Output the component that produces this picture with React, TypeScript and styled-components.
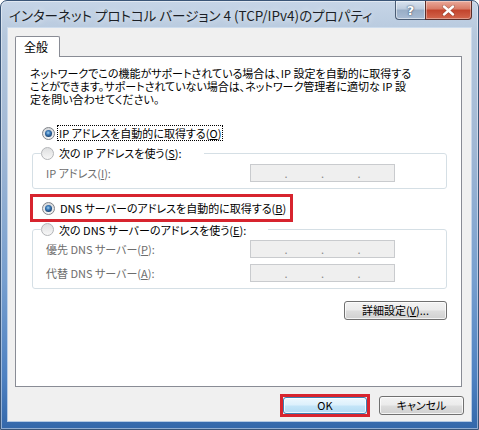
import React from "react";
import styled, { createGlobalStyle } from "styled-components";

const GlobalStyle = createGlobalStyle`
  html, body {
    margin: 0;
    padding: 0;
    background: #fff;
  }
  body {
    font-family: "Noto Sans CJK JP", "Noto Sans", sans-serif;
    font-feature-settings: "palt";
  }
`;

const uiFont = `"Noto Sans CJK JP", "Noto Sans", sans-serif`;

const App = () => {
    return (
        <>
            <GlobalStyle />
            <Frame>
                <TitleBar>
                    <Title>インターネット プロトコル バージョン 4 (TCP/IPv4)のプロパティ</Title>
                    <CaptionButtons>
                        <HelpButton>?</HelpButton>
                        <CloseButton>
                            <svg width="13" height="11" viewBox="0 0 13 11">
                                <path d="M2 1.5 L11 9.5 M11 1.5 L2 9.5" stroke="#3b1a14" strokeWidth="3.6" strokeLinecap="round" opacity="0.35" />
                                <path d="M2 1.5 L11 9.5 M11 1.5 L2 9.5" stroke="#fff" strokeWidth="2.4" strokeLinecap="round" />
                            </svg>
                        </CloseButton>
                    </CaptionButtons>
                </TitleBar>
                <Client>
                    <TabStrip>
                        <Tab>全般</Tab>
                    </TabStrip>
                    <Panel>
                        <Description>
                            ネットワークでこの機能がサポートされている場合は、IP 設定を自動的に取得する
                            <br />
                            ことができます。サポートされていない場合は、ネットワーク管理者に適切な IP 設
                            <br />
                            定を問い合わせてください。
                        </Description>

                        <RadioRow $indent={26}>
                            <Radio $checked />
                            <Label $focused>
                                IP アドレスを自動的に取得する(<u>O</u>)
                            </Label>
                        </RadioRow>

                        <GroupBox>
                            <Legend>
                                <RadioRow $height={16}>
                                    <Radio />
                                    <Label>
                                        次の IP アドレスを使う(<u>S</u>):
                                    </Label>
                                </RadioRow>
                            </Legend>
                            <FieldRow>
                                <FieldLabel>
                                    IP アドレス(<u>I</u>):
                                </FieldLabel>
                                <IpField />
                            </FieldRow>
                        </GroupBox>

                        <Highlight>
                            <RadioRow>
                                <Radio $checked />
                                <Label>
                                    DNS サーバーのアドレスを自動的に取得する(<u>B</u>)
                                </Label>
                            </RadioRow>
                        </Highlight>

                        <GroupBox $gap={4}>
                            <Legend>
                                <RadioRow $height={15}>
                                    <Radio />
                                    <Label>
                                        次の DNS サーバーのアドレスを使う(<u>E</u>):
                                    </Label>
                                </RadioRow>
                            </Legend>
                            <FieldRow>
                                <FieldLabel>
                                    優先 DNS サーバー(<u>P</u>):
                                </FieldLabel>
                                <IpField />
                            </FieldRow>
                            <FieldRow $top={6}>
                                <FieldLabel>
                                    代替 DNS サーバー(<u>A</u>):
                                </FieldLabel>
                                <IpField />
                            </FieldRow>
                        </GroupBox>

                        <AdvancedButton>
                            詳細設定(<u>V</u>)...
                        </AdvancedButton>
                    </Panel>
                    <Footer>
                        <OkHighlight>
                            <PushButton $primary $width={84} $height={17}>
                                OK
                            </PushButton>
                        </OkHighlight>
                        <PushButton $width={85}>キャンセル</PushButton>
                    </Footer>
                </Client>
            </Frame>
        </>
    );
};

const IpField = () => (
    <IpBox>
        <IpDot>.</IpDot>
        <IpDot>.</IpDot>
        <IpDot>.</IpDot>
    </IpBox>
);

const Frame = styled.div`
    width: 479px;
    height: 430px;
    box-sizing: border-box;
    display: flex;
    flex-direction: column;
    border: 1px solid #3a5577;
    border-radius: 7px 7px 0 0;
    overflow: hidden;
    background: linear-gradient(
        180deg,
        #c6d5e7 0%,
        #b6c8dd 8%,
        #a0b7d4 35%,
        #779fcf 65%,
        #4e81c1 88%,
        #3367aa 100%
    );
    box-shadow: inset 0 0 0 1px rgba(255, 255, 255, 0.45);
`;
const TitleBar = styled.div`
    height: 27px;
    display: flex;
    align-items: flex-start;
    flex: none;
`;
const Title = styled.div`
    padding-left: 8px;
    line-height: 28px;
    font-family: ${uiFont};
    font-size: 13.5px;
    color: #1b1f26;
    white-space: nowrap;
    text-shadow: 0 0 6px rgba(255, 255, 255, 0.8);
`;
const CaptionButtons = styled.div`
    margin-left: auto;
    margin-right: 6px;
    display: flex;
`;
const HelpButton = styled.div`
    width: 30px;
    height: 19px;
    box-sizing: border-box;
    border: 1px solid #4a5c74;
    border-top: none;
    border-right: none;
    border-radius: 0 0 0 4px;
    background: linear-gradient(180deg, #d9e3ef 0%, #bccbdd 45%, #98adc6 50%, #a9bcd4 100%);
    box-shadow: inset 0 0 0 1px rgba(255, 255, 255, 0.5);
    display: flex;
    align-items: center;
    justify-content: center;
    color: #fff;
    font-family: "DejaVu Sans", sans-serif;
    font-weight: bold;
    font-size: 13px;
    text-shadow: 0 0 2px #3d506a, 0 0 1px #3d506a;
`;
const CloseButton = styled.div`
    width: 47px;
    height: 19px;
    box-sizing: border-box;
    border: 1px solid #5a2d28;
    border-top: none;
    border-radius: 0 0 4px 0;
    background: linear-gradient(180deg, #e9a99a 0%, #d87a65 45%, #c2432c 50%, #d3664d 100%);
    box-shadow: inset 0 0 0 1px rgba(255, 255, 255, 0.35);
    display: flex;
    align-items: center;
    justify-content: center;
`;
const Client = styled.div`
    flex: 1;
    margin: 0 7px 8px;
    padding: 8px 9px 0 7px;
    background: #f0f0f0;
    box-shadow: 0 0 0 1px rgba(210, 224, 240, 0.8);
    display: flex;
    flex-direction: column;
    font-family: ${uiFont};
    font-size: 11px;
    color: #000;
`;
const TabStrip = styled.div`
    display: flex;
    flex: none;
`;
const Tab = styled.div`
    width: 45px;
    height: 21px;
    box-sizing: border-box;
    margin-bottom: -1px;
    position: relative;
    z-index: 1;
    padding-left: 8px;
    line-height: 20px;
    font-size: 12px;
    background: #fff;
    border: 1px solid #898c95;
    border-bottom: none;
    border-radius: 2px 2px 0 0;
`;
const Panel = styled.div`
    flex: 1;
    background: #fff;
    border: 1px solid #898c95;
    display: flex;
    flex-direction: column;
    align-items: flex-start;
    padding-top: 10px;
`;
const Description = styled.p`
    margin: 0 0 0 14px;
    line-height: 13px;
    white-space: nowrap;
`;
const RadioRow = styled.div<{ $indent?: number; $height?: number }>`
    display: flex;
    align-items: center;
    height: ${(p) => p.$height ?? 16}px;
    margin-left: ${(p) => p.$indent ?? 0}px;
    margin-top: ${(p) => (p.$indent ? 19 : 0)}px;
    white-space: nowrap;
`;
const Radio = styled.span<{ $checked?: boolean }>`
    width: 13px;
    height: 13px;
    box-sizing: border-box;
    flex: none;
    border-radius: 50%;
    border: 1px solid ${(p) => (p.$checked ? "#7f8389" : "#b3b5b8")};
    background: ${(p) =>
        p.$checked
            ? "linear-gradient(180deg, #d6d8db 0%, #f3f4f5 100%)"
            : "linear-gradient(180deg, #dedfe0 0%, #f7f7f7 100%)"};
    display: flex;
    align-items: center;
    justify-content: center;
    &::after {
        content: "";
        display: ${(p) => (p.$checked ? "block" : "none")};
        width: 7px;
        height: 7px;
        border-radius: 50%;
        background: radial-gradient(circle at 45% 40%, #9fd0f0 0%, #3c7ab8 35%, #173f6c 75%, #0c2746 100%);
    }
`;
const Label = styled.span<{ $focused?: boolean }>`
    margin-left: ${(p) => (p.$focused ? 2 : 3)}px;
    padding: 0 1px;
    line-height: 14px;
    border: 1px dotted ${(p) => (p.$focused ? "#000" : "transparent")};
`;
const GroupBox = styled.fieldset<{ $gap?: number }>`
    align-self: stretch;
    min-width: 0;
    margin: ${(p) => (p.$gap === 4 ? 0 : 4)}px 14px 0 16px;
    padding: 0 0 6px 0;
    border: 1px solid #d5dfe5;
    border-radius: 3px;
`;
const Legend = styled.legend`
    margin-left: 8px;
    padding: 0 20px 0 0;
`;
const FieldRow = styled.div<{ $top?: number }>`
    display: flex;
    align-items: center;
    height: 18px;
    margin-top: ${(p) => p.$top ?? 3}px;
    padding-left: 13px;
`;
const FieldLabel = styled.span`
    width: 204px;
    color: #6d6d6d;
    white-space: nowrap;
`;
const IpBox = styled.div`
    width: 145px;
    height: 18px;
    box-sizing: border-box;
    border: 1px solid #c9cbce;
    background: #efefef;
    display: flex;
    justify-content: space-evenly;
    align-items: center;
`;
const IpDot = styled.span`
    color: #8a8a8a;
    font-size: 11px;
    line-height: 11px;
`;
const Highlight = styled.div`
    box-sizing: border-box;
    width: 263px;
    height: 28px;
    margin: 5px 0 0 14px;
    padding-left: 9px;
    border: 3px solid #d7242e;
    display: flex;
    align-items: center;
`;
const PushButton = styled.button<{ $primary?: boolean; $width: number; $height?: number }>`
    box-sizing: border-box;
    width: ${(p) => p.$width}px;
    height: ${(p) => p.$height ?? 19}px;
    padding: 0;
    border: 1px solid ${(p) => (p.$primary ? "#3c7fb1" : "#707070")};
    border-radius: 3px;
    background: ${(p) =>
        p.$primary
            ? "linear-gradient(180deg, #eef8fe 0%, #dcf0fc 48%, #c4e5f8 52%, #b3dbf3 100%)"
            : "linear-gradient(180deg, #f3f3f3 0%, #ebebeb 48%, #dddddd 52%, #d0d0d0 100%)"};
    box-shadow: inset 0 0 0 1px rgba(255, 255, 255, 0.75);
    font-family: ${uiFont};
    font-feature-settings: "palt";
    font-size: 11px;
    color: #000;
    line-height: 1;
`;
const AdvancedButton = styled(PushButton).attrs({ $width: 103 })`
    align-self: flex-end;
    margin: 12px 14px 0 0;
`;
const Footer = styled.div`
    flex: none;
    height: 23px;
    margin: 7px -2px 4px 0;
    display: flex;
    justify-content: flex-end;
    align-items: center;
    gap: 9px;
`;
const OkHighlight = styled.div`
    box-sizing: border-box;
    width: 90px;
    height: 23px;
    border: 3px solid #d7242e;
    display: flex;
`;

export default App;
